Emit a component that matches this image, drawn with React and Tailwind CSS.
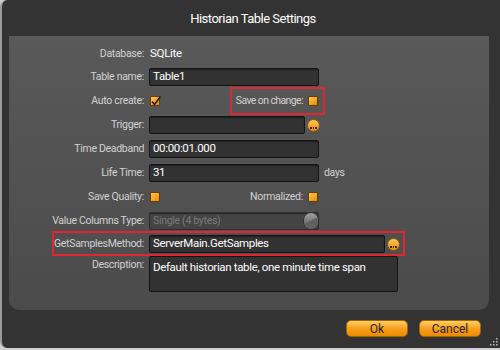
import React from "react";

const font = { fontFamily: 'Roboto, "Open Sans", sans-serif' };

function Check({ checked }) {
  return (
    <div className="relative w-[10px] h-[10px] rounded-[1px] border border-[#6a3a00] bg-gradient-to-br from-[#ffc54a] to-[#e88a00]">
      {checked && (
        <svg className="absolute -left-[1px] -top-[2px]" width="12" height="12" viewBox="0 0 12 12">
          <path d="M2 6.5 L4.5 9.5 L10.5 1.5" fill="none" stroke="#222" strokeWidth="1.6" />
        </svg>
      )}
    </div>
  );
}

function Ellipsis() {
  return (
    <div className="w-[13px] h-[13px] rounded-full bg-gradient-to-b from-[#ffc850] to-[#e88a00] border border-[#8a5a10] flex items-end justify-center pb-[2px] gap-[1px]">
      <span className="w-[1.5px] h-[1.5px] bg-[#3a2a10]" />
      <span className="w-[1.5px] h-[1.5px] bg-[#3a2a10]" />
      <span className="w-[1.5px] h-[1.5px] bg-[#3a2a10]" />
    </div>
  );
}

function Input({ w, value, children, className = "" }) {
  return (
    <div
      className={`h-[18px] bg-[#323232] border border-[#141414] rounded-[2px] flex items-center pl-[3px] text-[11.5px] tracking-[-0.35px] text-white shadow-[inset_0_1px_1px_rgba(0,0,0,0.4)] ${className}`}
      style={{ width: w }}
    >
      {value}
      {children}
    </div>
  );
}

const labelCls = "text-[10.5px] tracking-[-0.3px] text-[#d2d2d2]";

function Row({ label, children, className = "h-6" }) {
  return (
    <div className={`flex items-center ${className}`}>
      <div className={`w-[140px] text-right pr-[5px] whitespace-nowrap ${labelCls}`}>{label}</div>
      <div className="flex items-center flex-1">{children}</div>
    </div>
  );
}

export default function App() {
  return (
    <div className="w-[500px] h-[350px] bg-[#d0d0d0] overflow-hidden" style={font}>
      <div className="w-[500px] h-[348px] bg-[#333333] border-l-[2px] border-[#9a9a9a] rounded-tl-[7px] rounded-bl-[7px] flex flex-col relative">
        <div className="h-[36px] flex items-center justify-center text-[13px] tracking-[-0.5px] text-white pl-[4px] pt-[1px]">
          Historian Table Settings
        </div>
        <div className="ml-[7px] w-[480px] h-[274px] bg-gradient-to-b from-[#595959] to-[#4b4b4b] rounded-b-[10px] pt-[7px] flex flex-col">
          <Row label="Database:" className="h-[22px]">
            <span className="text-[11.5px] tracking-[-0.3px] text-white pl-[1px]">SQLite</span>
          </Row>
          <Row label="Table name:" className="h-[24px]">
            <Input w={170} value="Table1" />
          </Row>
          <Row label="Auto create:">
            <div className="w-[170px] flex items-center justify-between pl-[1px]">
              <Check checked />
              <div className="relative flex items-center gap-[5px] pr-[1px]">
                <span className="text-[10.5px] tracking-[-0.6px] text-[#d2d2d2]">Save on change:</span>
                <Check />
                <div className="absolute w-[95px] -right-[6px] -top-[6px] -bottom-[6px] border-2 border-[#e0262e]" />
              </div>
            </div>
          </Row>
          <Row label="Trigger:">
            <Input w={156} value="" />
            <div className="ml-[2px]"><Ellipsis /></div>
          </Row>
          <Row label="Time Deadband">
            <Input w={170} value="00:00:01.000" />
          </Row>
          <Row label="Life Time:">
            <Input w={170} value="31" />
            <span className={`ml-[5px] ${labelCls}`}>days</span>
          </Row>
          <Row label="Save Quality:">
            <div className="w-[170px] flex items-center justify-between pl-[1px]">
              <Check />
              <div className="flex items-center gap-[5px] pr-[1px]">
                <span className={labelCls}>Normalized:</span>
                <Check />
              </div>
            </div>
          </Row>
          <Row label="Value Columns Type:" className="h-[23px]">
            <Input w={170} value="" className="relative !bg-[#444] !border-[#2e2e2e]">
              <span className="text-[10.5px] tracking-[-0.3px] text-[#7a7a7a]">Single (4 bytes)</span>
              <div className="absolute right-[-1px] top-[-1px] w-[16px] h-[18px] rounded-full bg-gradient-to-b from-[#a0a0a0] to-[#5a5a5a] border border-[#333] overflow-hidden">
                <svg width="16" height="18" viewBox="0 0 16 18" className="absolute left-0 top-0">
                  <path d="M1 12 C4 7 6 9 8 7 C10 5 12 6 15 4 L15 17 L1 17 Z" fill="#606060" />
                </svg>
              </div>
            </Input>
          </Row>
          <Row label="GetSamplesMethod:" className="h-[24px]">
            <div className="relative flex items-center">
              <div className="absolute -left-[97px] w-[353px] h-[25px] -top-[4px] border-2 border-[#e0262e]" />
              <Input w={236} value="ServerMain.GetSamples" />
              <div className="ml-[2px]"><Ellipsis /></div>
            </div>
          </Row>
          <div className="flex items-start mt-[0px]">
            <div className={`w-[140px] text-right pr-[5px] pt-[1px] ${labelCls}`}>Description:</div>
            <div className="w-[249px] h-[36px] bg-[#323232] border border-[#141414] rounded-[2px] text-[11.5px] tracking-[-0.35px] text-white px-[3px] pt-[2px] leading-[16px]">
              Default historian table, one minute time span
            </div>
          </div>
        </div>
        <div className="flex justify-end gap-[11px] pr-[19px] mt-[10px]">
          <button className="w-[62px] h-[17px] rounded-[5px] border border-[#a86400] bg-gradient-to-b from-[#ffcf60] via-[#f7a01c] to-[#ef8c00] text-[12px] text-[#222] leading-none">Ok</button>
          <button className="w-[62px] h-[17px] rounded-[5px] border border-[#a86400] bg-gradient-to-b from-[#ffcf60] via-[#f7a01c] to-[#ef8c00] text-[12px] text-[#222] leading-none">Cancel</button>
        </div>
        <svg className="absolute right-[2px] bottom-[2px]" width="10" height="10" viewBox="0 0 10 10">
          <g fill="#bbb">
            <rect x="8" y="2" width="1.5" height="1.5" />
            <rect x="5" y="5" width="1.5" height="1.5" />
            <rect x="8" y="5" width="1.5" height="1.5" />
            <rect x="2" y="8" width="1.5" height="1.5" />
            <rect x="5" y="8" width="1.5" height="1.5" />
            <rect x="8" y="8" width="1.5" height="1.5" />
          </g>
        </svg>
      </div>
    </div>
  );
}
